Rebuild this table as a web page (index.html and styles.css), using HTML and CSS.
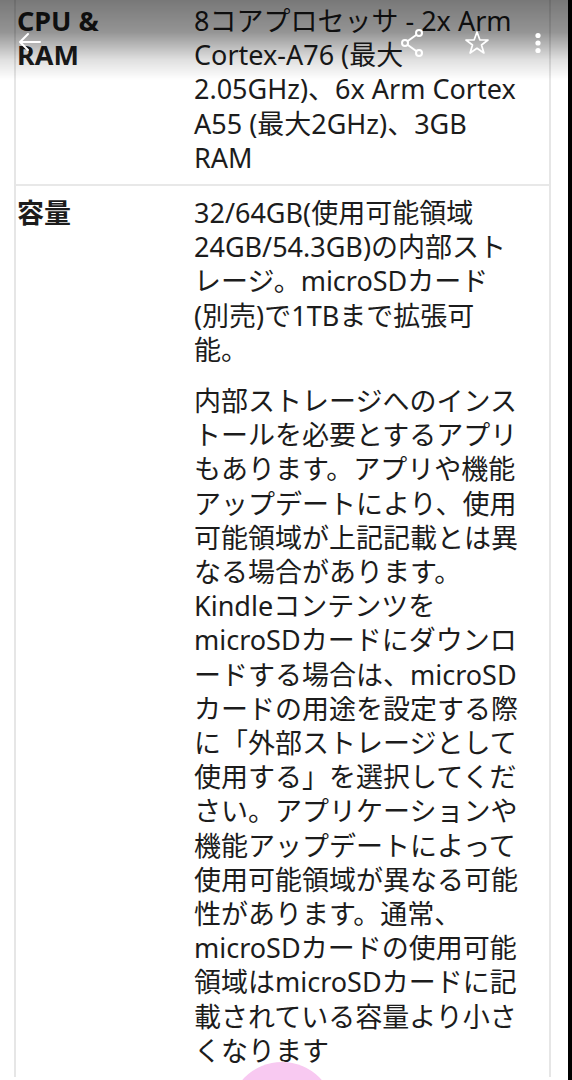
FILE: index.html
```html
<!DOCTYPE html>
<html lang="ja">
<head>
<meta charset="utf-8">
<link rel="stylesheet" href="styles.css">
</head>
<body>
<div class="page">
  <div class="specs">
    <div class="row">
      <div class="label">CPU &amp; RAM</div>
      <div class="value"><p>8コアプロセッサ - 2x Arm Cortex-A76 (最大2.05GHz)、6x Arm Cortex A55 (最大2GHz)、3GB RAM</p></div>
    </div>
    <div class="row">
      <div class="label">容量</div>
      <div class="value">
        <p>32/64GB(使用可能領域24GB/54.3GB)の内部ストレージ。microSDカード(別売)で1TBまで拡張可能。</p>
        <p>内部ストレージへのインストールを必要とするアプリもあります。アプリや機能アップデートにより、使用可能領域が上記記載とは異なる場合があります。Kindleコンテンツを microSDカードにダウンロードする場合は、microSDカードの用途を設定する際に「外部ストレージとして使用する」を選択してください。アプリケーションや機能アップデートによって使用可能領域が異なる可能性があります。通常、microSDカードの使用可能領域はmicroSDカードに記載されている容量より小さくなります</p>
      </div>
    </div>
  </div>
</div>

<div class="topbar">
  <svg class="icon back" width="28" height="24" viewBox="0 0 28 24"><path d="M4 12H24M4 12L12 4M4 12L12 20" fill="none" stroke="#fff" stroke-width="2" stroke-linecap="round"/></svg>
  <div class="actions">
    <svg class="icon" width="28" height="30" viewBox="0 0 28 30"><g fill="none" stroke="#fff" stroke-width="2"><circle cx="21" cy="5" r="3"/><circle cx="7" cy="15" r="3"/><circle cx="21" cy="25" r="3"/><path d="M18.5 6.8L9.5 13.2M9.5 16.8L18.5 23.2"/></g></svg>
    <svg class="icon" width="28" height="28" viewBox="0 0 28 28"><path d="M14 3L16.8 10.8L25 11L18.5 16L20.9 24L14 19.3L7.1 24L9.5 16L3 11L11.2 10.8Z" fill="none" stroke="#fff" stroke-width="1.7" stroke-linejoin="round"/></svg>
    <svg class="icon kebab" width="8" height="24" viewBox="0 0 8 24"><circle cx="4" cy="4.5" r="2.6" fill="#fff"/><circle cx="4" cy="12" r="2.6" fill="#fff"/><circle cx="4" cy="19.5" r="2.6" fill="#fff"/></svg>
  </div>
</div>

<div class="fab"></div>
</body>
</html>
```

FILE: styles.css
```css
html {
  background: #000;
}
body {
  margin: 0;
  width: 568px;
  min-height: 1080px;
  background: #fff;
  overflow: hidden;
  font-family: "Noto Sans", "Noto Sans CJK JP", sans-serif;
  color: #1c1c1c;
}
.page {
  padding: 0 17px 0 14px;
  margin-top: -6px;
}
.specs {
  border-left: 2px solid #e6e6e6;
  border-right: 2px solid #e6e6e6;
}
.row {
  display: grid;
  grid-template-columns: 178px 1fr;
  border-bottom: 2px solid #e8e8e8;
  padding: 10px 0 9px;
}
.row:last-child {
  border-bottom: none;
}
.label {
  font-size: 27px;
  line-height: 34.2px;
  font-weight: 700;
  padding: 0 40px 0 1px;
}
.value {
  font-size: 27px;
  line-height: 34.2px;
  padding-right: 26px;
}
.value p {
  margin: 0 0 17px;
}
.value p:last-child {
  margin-bottom: 0;
}
.topbar {
  position: fixed;
  left: 0;
  top: 0;
  width: 568px;
  height: 80px;
  background: linear-gradient(to bottom, rgba(0,0,0,0.53) 0%, rgba(0,0,0,0.42) 40%, rgba(0,0,0,0.12) 75%, rgba(0,0,0,0) 100%);
  display: flex;
  align-items: flex-start;
  justify-content: space-between;
}
.back {
  margin: 30px 0 0 16px;
}
.actions {
  display: flex;
  align-items: center;
  gap: 37px;
  margin: 28px 26px 0 0;
}
.kebab {
  margin-left: 6px;
}
.icon {
  display: block;
}
.fab {
  position: fixed;
  left: 229px;
  top: 1062px;
  width: 106px;
  height: 106px;
  border-radius: 50%;
  background: #f8c9f1;
}
```
